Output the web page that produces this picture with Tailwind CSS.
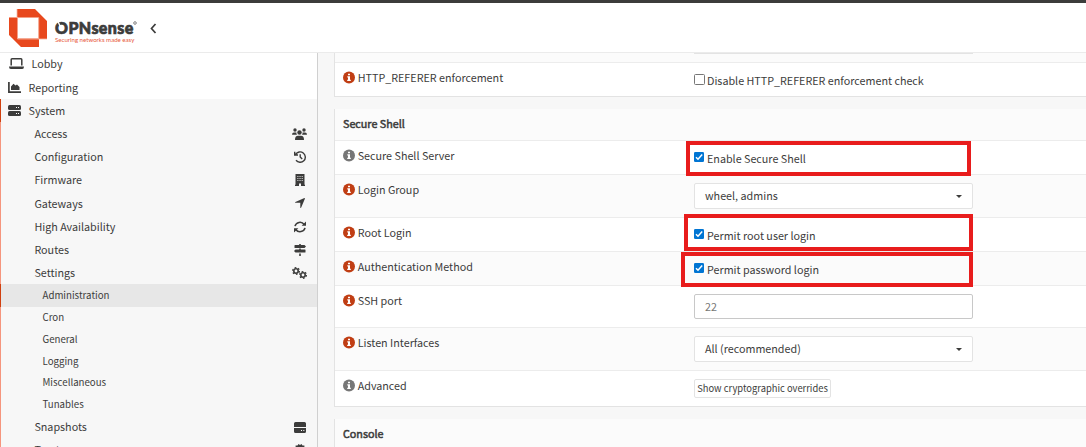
<!DOCTYPE html>
<html lang="en">
<head>
<meta charset="utf-8">
<title>Administration | Settings | System | OPNsense</title>
<script src="https://cdn.jsdelivr.net/npm/@tailwindcss/browser@4"></script>
</head>
<body class="w-[1086px] h-[447px] overflow-hidden flex flex-col bg-[#f7f7f7] text-[#3c3c3b] font-['Noto_Sans_CJK_SC','Noto_Sans',sans-serif] text-[10.75px] leading-[16px] whitespace-nowrap">
<svg width="0" height="0" class="hidden">
  <symbol id="info" viewBox="0 0 12 13"><circle cx="6" cy="6.400" r="6" fill="currentColor"/><path fill="#fff" d="M5 2.700h2v1.500H5zM4.300 5.200H7V8.800h.8V10H4.200V8.800H5V6.400h-.7z"/></symbol>
  <symbol id="check" viewBox="0 0 10 10"><rect width="10" height="10" rx="1.300" fill="#0075d3"/><path d="M2 5.200 4 7.200 8.200 2.500" fill="none" stroke="#fff" stroke-width="1.500"/></symbol>
  <symbol id="caret" viewBox="0 0 6 3"><path d="M0 0h6L3 3z" fill="currentColor"/></symbol>
</svg>
<header class="h-[53px] shrink-0 bg-white border-t-[3px] border-t-[#3c3c3b] border-b border-b-[#ebebeb] flex">
  <svg class="ml-[9px] mt-[6px]" width="38" height="38" viewBox="0 0 38 38"><path fill="#e8481d" fill-rule="evenodd" d="M8 0H26L38 12V30H30V38H12L0 26V8H8ZM9 9V29.500H29.500V9Z"/><path fill="none" stroke="#f6b6a2" stroke-width=".8" d="M8 0V8.500H29.700V30H38M0 8.500H8.500V30H30"/></svg>
  <div class="ml-[8px] mt-[17px] w-[84px] flex flex-col">
    <div class="relative flex h-[16px] items-start font-['Lato',sans-serif] font-black text-[16px] leading-[16px] tracking-[0.400px] [-webkit-text-stroke:0.7px_#3c3c3b]"><span>OPNsense</span><svg class="mt-[1px] -ml-px" width="4" height="4" viewBox="0 0 4 4"><circle cx="2" cy="2" r="1.300" fill="none" stroke="#777" stroke-width=".9"/></svg>
      <svg class="absolute left-0 top-[1px]" width="8" height="8" viewBox="0 0 8 8"><path d="M2.800 0 5 5" stroke="#fff" stroke-width="1.300"/></svg></div>
    <div class="h-[8px] font-['Lato',sans-serif] text-[6.100px] leading-[8px] text-[#e8593a]">Securing networks made easy</div>
  </div>
  <svg class="ml-[11px] mt-[20px]" width="7" height="11" viewBox="0 0 7 11"><path d="M5.500 1 1.500 5.500 5.500 10" fill="none" stroke="#3c3c3b" stroke-width="1.700"/></svg>
</header>
<div class="flex flex-1 min-h-0">
  <nav class="w-[318px] shrink-0 border-r border-[#d0d0d0] flex flex-col">
    <div class="h-[23px] shrink-0 bg-white flex items-center pl-[9px] pb-[2px]"><svg width="15" height="11" viewBox="0 0 15 11"><path fill="none" stroke="currentColor" stroke-width="1.500" d="M2.200 7.500V1.700Q2.200.8 3 .8H12Q12.800.8 12.800 1.700V7.500"/><path fill="currentColor" d="M0 8.500H15Q15 11 13.200 11H1.800Q0 11 0 8.500"/></svg><span class="ml-[7.500px]">Lobby</span></div>
    <div class="h-[23px] shrink-0 bg-white flex items-center pl-[8px]"><svg width="13" height="11" viewBox="0 0 13 11"><path fill="none" stroke="currentColor" stroke-width="1.700" d="M.9 0V10.100H13"/><path fill="currentColor" d="M3 8V4.500L5.500 1.700 7.500 3.500 9 2.500 11.500 5V8Z"/></svg><span class="ml-[7.500px]">Reporting</span></div>
    <div class="h-[23px] shrink-0 border-l border-[#d0400f] flex items-center pl-[7px]"><svg width="13" height="11" viewBox="0 0 13 11"><rect width="13" height="5" rx="1.500" fill="currentColor"/><rect y="6" width="13" height="5" rx="1.500" fill="currentColor"/><path stroke="#fff" d="M8 2.500h1M10 2.500h1M8 8.500h1M10 8.500h1"/></svg><span class="ml-[7.500px]">System</span></div>
    <div class="flex flex-col shrink-0 border-l border-[#f5957d] pr-[4px]">
      <div class="h-[23px] flex items-center pl-[33.400px] pr-[6px]"><span>Access</span><svg class="ml-auto" width="15" height="12" viewBox="0 0 15 12" fill="currentColor"><circle cx="3" cy="2" r="1.700"/><circle cx="12" cy="2" r="1.700"/><circle cx="7.500" cy="4.500" r="2.200"/><path d="M0 6.800Q0 4.500 2 4.500H4.400Q4.300 6 5 6.800ZM15 6.800Q15 4.500 13 4.500H10.600Q10.700 6 10 6.800ZM3 12Q3 7.800 6 7.800H9Q12 7.800 12 12Z"/></svg></div>
      <div class="h-[23px] flex items-center pl-[33.400px] pr-[7px]"><span>Configuration</span><svg class="ml-auto" width="12" height="12" viewBox="0 0 12 12" fill="none" stroke="currentColor" stroke-width="1.400"><path d="M1.600 3.500A5.200 5.200 0 1 1 2 9.300M.7.700V4H4M6.200 3.200V6L8.200 8"/></svg></div>
      <div class="h-[23px] flex items-center pl-[33.400px] pr-[8px]"><span>Firmware</span><svg class="ml-auto" width="10" height="12" viewBox="0 0 10 12"><path fill="currentColor" d="M.5 0H9.500V10.700H10V12H6V9.500H4V12H0V10.700H.5Z"/><path stroke="#f7f7f7" stroke-width=".7" d="M2.200 2.500h1.300M4.400 2.500h1.300M6.600 2.500h1.300M2.200 4.500h1.300M4.400 4.500h1.300M6.600 4.500h1.300M2.200 6.500h1.300M4.400 6.500h1.300M6.600 6.500h1.300"/></svg></div>
      <div class="h-[24px] flex items-center pl-[33.400px] pr-[8px]"><span class="pt-px">Gateways</span><svg class="ml-auto" width="10" height="10" viewBox="0 0 10 10" fill="currentColor"><path d="M9.400 0Q10.200 0 9.900.8L6.200 9.600Q5.900 10.200 5.300 9.900V4.800H.3Q-.3 4.200.4 3.900Z"/></svg></div>
      <div class="h-[23px] flex items-center pl-[33.400px] pr-[7px]"><span>High Availability</span><svg class="ml-auto" width="12" height="12" viewBox="0 0 11 11" fill="none" stroke="currentColor" stroke-width="1.400"><path d="M.9 4.700A4.700 4.700 0 0 1 9.300 3.200M10.100 6.300A4.700 4.700 0 0 1 1.700 7.800"/><path fill="currentColor" stroke="none" d="M11 .4V4.400H7ZM0 10.600V6.600H4Z"/></svg></div>
      <div class="h-[23px] flex items-center pl-[33.400px] pr-[7px]"><span>Routes</span><svg class="ml-auto" width="12" height="12" viewBox="0 0 12 12" fill="currentColor"><path d="M5.200 0H6.800V1H10.500L12 2.500 10.500 4H1Q.5 4 .5 3.500V1.500Q.5 1 1 1H5.200ZM5.200 4.500H6.800V5.500H11Q11.500 5.500 11.500 6V8Q11.500 8.500 11 8.500H1.500L0 7 1.500 5.500H5.200ZM5.200 9.500H6.800V12H5.200Z"/></svg></div>
      <div class="h-[23px] flex items-center pl-[33.400px] pr-[6px]"><span>Settings</span><svg class="ml-auto" width="15" height="12" viewBox="0 0 15 12" fill="none" stroke="currentColor"><circle cx="4" cy="4" r="2.200" stroke-width="1.600"/><circle cx="4" cy="4" r="3.400" stroke-width="1.200" stroke-dasharray="1.700 1.860"/><circle cx="11" cy="8" r="2.200" stroke-width="1.600"/><circle cx="11" cy="8" r="3.400" stroke-width="1.200" stroke-dasharray="1.700 1.860"/></svg></div>
    </div>
    <div class="h-[23px] shrink-0 border-l border-[#d0400f] bg-[#e7e7e7] flex items-center pl-[41.500px] pb-px text-[9.700px]">Administration</div>
    <div class="flex flex-col shrink-0 border-l border-[#f5957d] text-[9.700px] pr-[4px]">
      <div class="h-[22px] flex items-center pl-[41.500px] pb-[2px]">Cron</div>
      <div class="h-[22px] flex items-center pl-[41.500px] pb-[2px]">General</div>
      <div class="h-[21px] flex items-center pl-[41.500px] pb-px">Logging</div>
      <div class="h-[22px] flex items-center pl-[41.500px] pb-[2px]">Miscellaneous</div>
      <div class="h-[22px] flex items-center pl-[41.500px] pb-[2px]">Tunables</div>
      <div class="h-[23px] flex items-center pl-[33.400px] pr-[7px] text-[10.750px] pb-px"><span>Snapshots</span><svg class="ml-auto" width="12" height="11" viewBox="0 0 12 11" fill="currentColor"><path d="M1.500 0H10.500Q12 0 12 1.500V5H0V1.500Q0 0 1.500 0M0 6H12V9.500Q12 11 10.500 11H1.500Q0 11 0 9.500Z"/><path stroke="#fff" d="M7 8.500h1M9.300 8.500h1"/></svg></div>
      <div class="h-[23px] flex items-center pl-[33.400px] pr-[7px] text-[10.750px] pb-px"><span>Trust</span><svg class="ml-auto" width="12" height="12" viewBox="0 0 12 12" fill="currentColor"><path d="M6 1 7.500 0 8.500 1.600 10.400 1.600 10.400 3.500 12 4.500 11 6 12 7.500 10.400 8.500V10.400H8.500L7.500 12 6 11 4.500 12 3.500 10.400H1.600V8.500L0 7.500 1 6 0 4.500 1.600 3.500V1.600H3.500L4.500 0Z"/></svg></div>
    </div>
  </nav>
  <main class="flex-1 min-w-0 pl-[16px] flex flex-col">
    <section class="h-[44px] shrink-0 border-l border-b border-[#e3e3e3]">
      <div class="h-[10px] bg-[#fbfbfb] border-b border-[#ececec] pl-[359px]"><div class="w-[279px] h-[1px] bg-[#e3e3e3]"></div></div>
      <div class="h-[33px] bg-white flex pl-[8px] pt-[7px]">
        <div class="w-[351px] flex items-start"><svg class="mt-[1px] text-[#c03e14]" width="12" height="13"><use href="#info"/></svg><span class="ml-[2.700px]">HTTP_REFERER enforcement</span></div>
        <div class="mt-[4px] size-[11px] border border-[#767676] rounded-[1.500px] bg-white"></div><span class="ml-[2px] pt-[3px]">Disable HTTP_REFERER enforcement check</span>
      </div>
    </section>
    <section class="mt-[12px] h-[298px] shrink-0 border-l border-b border-[#e3e3e3]">
      <div class="h-[32px] bg-[#fbfbfb] border-b border-[#ececec] pl-[8px] pt-[7px] [-webkit-text-stroke:0.5px_#3c3c3b]">Secure Shell</div>
      <div class="relative h-[34px] bg-white border-b border-[#ececec] flex pl-[8px] pt-[7px]">
        <div class="w-[351px] flex items-start"><svg class="mt-[1px] text-[#777]" width="12" height="13"><use href="#info"/></svg><span class="ml-[2.700px]">Secure Shell Server</span></div>
        <svg class="mt-[4px]" width="10" height="10"><use href="#check"/></svg><span class="ml-[3px] pt-[3px]">Enable Secure Shell</span>
        <div class="absolute z-10 left-[351px] top-0 w-[285px] h-[35px] border-4 border-[#e81c1c]"></div>
      </div>
      <div class="h-[43px] bg-[#fbfbfb] border-b border-[#ececec] flex pl-[8px] pt-[7px]">
        <div class="w-[351px] flex items-start"><svg class="mt-[1px] text-[#c03e14]" width="12" height="13"><use href="#info"/></svg><span class="ml-[2.700px]">Login Group</span></div>
        <div class="mt-[1px] w-[279px] h-[26px] bg-white border border-[#e3e3e3] rounded-[2px] flex items-center pl-[10px] pr-[10px] justify-between"><span class="pb-px">wheel, admins</span><svg width="6" height="3"><use href="#caret"/></svg></div>
      </div>
      <div class="relative h-[34px] bg-white border-b border-[#ececec] flex pl-[8px] pt-[7px]">
        <div class="w-[351px] flex items-start"><svg class="mt-[1px] text-[#c03e14]" width="12" height="13"><use href="#info"/></svg><span class="ml-[2.700px]">Root Login</span></div>
        <svg class="mt-[4px]" width="10" height="10"><use href="#check"/></svg><span class="ml-[3px] pt-[3px]">Permit root user login</span>
        <div class="absolute z-10 left-[349px] top-[-4px] w-[289px] h-[37px] border-4 border-[#e81c1c]"></div>
      </div>
      <div class="relative h-[34px] bg-[#fbfbfb] border-b border-[#ececec] flex pl-[8px] pt-[7px]">
        <div class="w-[351px] flex items-start"><svg class="mt-[1px] text-[#c03e14]" width="12" height="13"><use href="#info"/></svg><span class="ml-[2.700px]">Authentication Method</span></div>
        <svg class="mt-[4px]" width="10" height="10"><use href="#check"/></svg><span class="ml-[3px] pt-[3px]">Permit password login</span>
        <div class="absolute z-10 left-[346px] top-0 w-[292px] h-[35px] border-4 border-[#e81c1c]"></div>
      </div>
      <div class="h-[42px] bg-white border-b border-[#ececec] flex pl-[8px] pt-[7px]">
        <div class="w-[351px] flex items-start"><svg class="mt-[1px] text-[#c03e14]" width="12" height="13"><use href="#info"/></svg><span class="ml-[2.700px]">SSH port</span></div>
        <div class="mt-[1px] w-[279px] h-[25px] bg-white border border-[#c8c8c8] rounded-[2px] flex items-center pl-[10px] text-[#777]">22</div>
      </div>
      <div class="h-[43px] bg-[#fbfbfb] border-b border-[#ececec] flex pl-[8px] pt-[7px]">
        <div class="w-[351px] flex items-start"><svg class="mt-[1px] text-[#c03e14]" width="12" height="13"><use href="#info"/></svg><span class="ml-[2.700px]">Listen Interfaces</span></div>
        <div class="mt-[1px] w-[279px] h-[26px] bg-white border border-[#e3e3e3] rounded-[2px] flex items-center pl-[10px] pr-[10px] justify-between"><span>All (recommended)</span><svg width="6" height="3"><use href="#caret"/></svg></div>
      </div>
      <div class="h-[35px] bg-white flex pl-[8px] pt-[7px]">
        <div class="w-[351px] flex items-start"><svg class="mt-[1px] text-[#777]" width="12" height="13"><use href="#info"/></svg><span class="ml-[2.700px]">Advanced</span></div>
        <div class="mt-[1px] w-[137px] h-[19px] bg-white border border-[#e3e3e3] rounded-[2px] flex items-center justify-center pb-px text-[9.400px]">Show cryptographic overrides</div>
      </div>
    </section>
    <section class="mt-[12px] h-[40px] shrink-0 border-l border-[#e3e3e3] bg-[#fbfbfb] pl-[8px] pt-[7px] [-webkit-text-stroke:0.5px_#3c3c3b]">Console</section>
  </main>
</div>
</body>
</html>
